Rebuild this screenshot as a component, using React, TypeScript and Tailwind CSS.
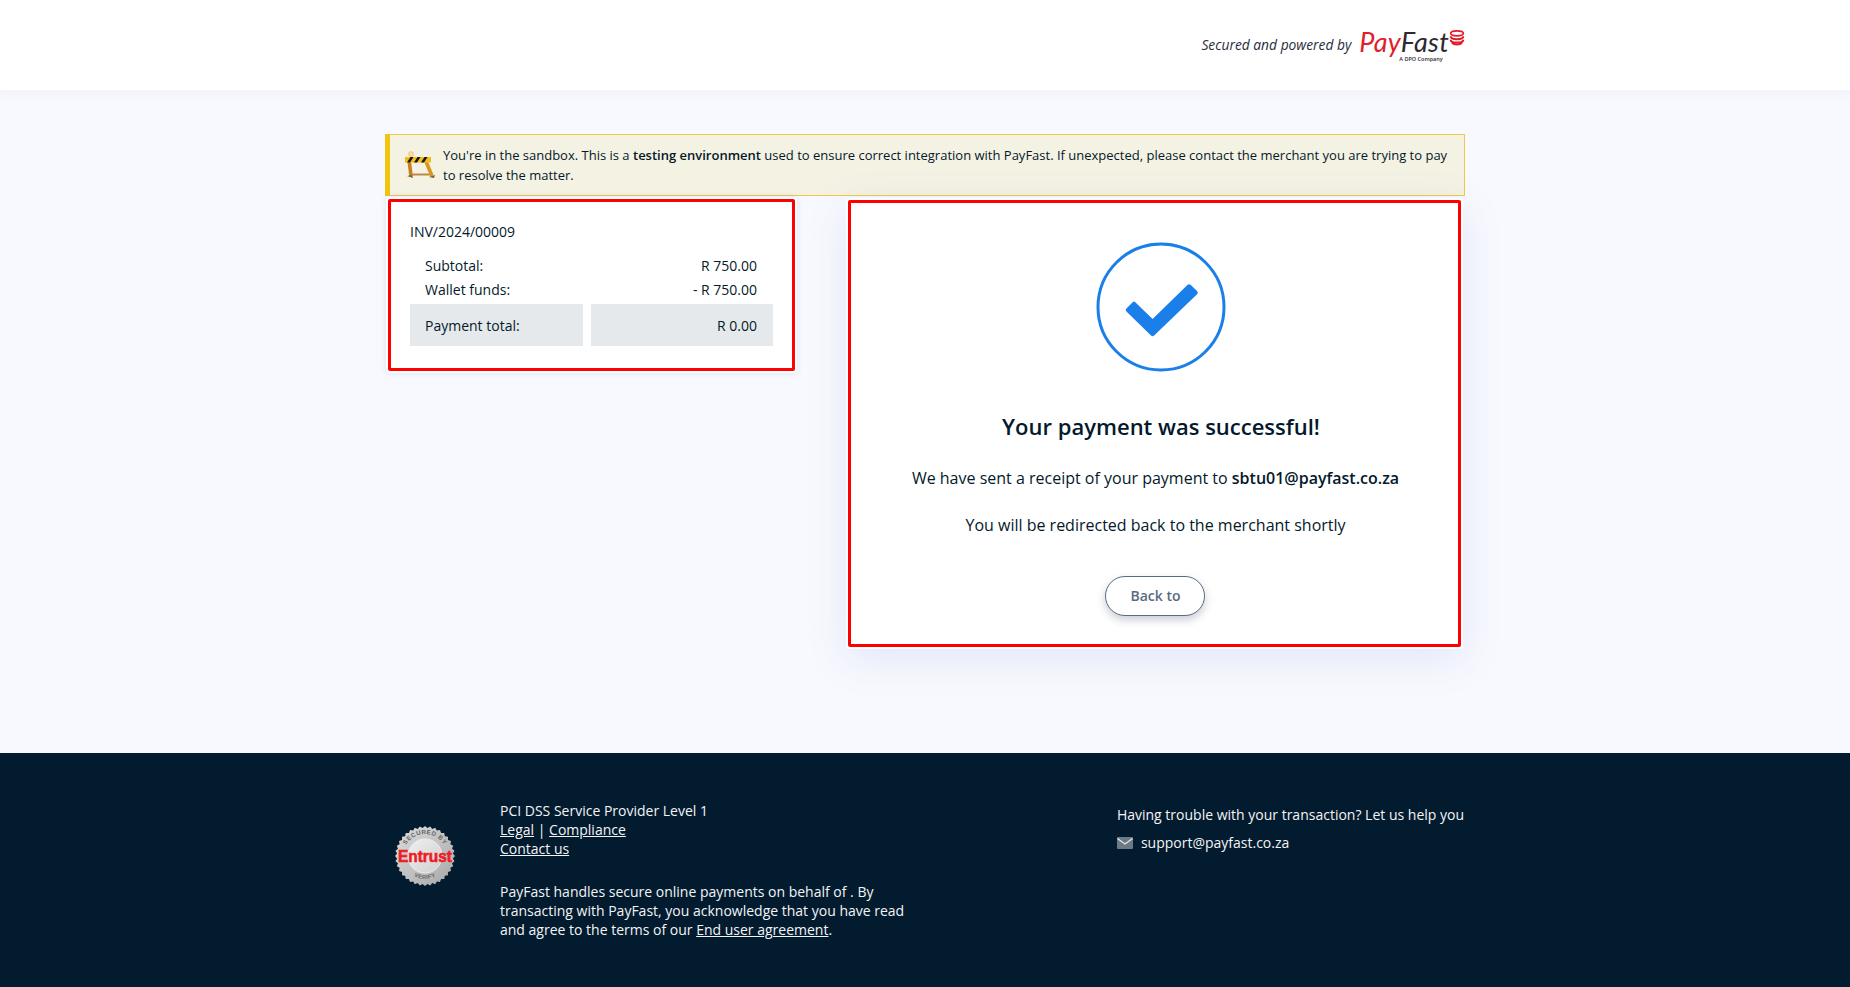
const font = { fontFamily: '"Open Sans", sans-serif' };

function Barricade() {
  return (
    <svg width="32" height="28" viewBox="0 0 32 28">
      <circle cx="8" cy="3" r="2.8" fill="#f0c98a" />
      <circle cx="8" cy="3" r="1.4" fill="#fbe6c0" />
      <path d="M6 8L8 25" stroke="#c77f1e" strokeWidth="3.6" />
      <path d="M22 8L29 25" stroke="#d9951f" strokeWidth="3.6" />
      <rect x="2" y="6" width="26" height="5.5" fill="#f0bd1d" />
      <path d="M4 11.5l3.5-5.5h3l-3.5 5.5zM11 11.5l3.5-5.5h3l-3.5 5.5zM18 11.5l3.5-5.5h3l-3.5 5.5z" fill="#1b1710" />
      <path d="M7 22.5h19l1 2H8z" fill="#b98a45" />
      <path d="M4 25l5-1 1 3zM26 26l6-2-1 3z" fill="#8a5a1e" />
    </svg>
  );
}

function CoinStack() {
  return (
    <svg width="16" height="16" viewBox="0 0 18 19" fill="none">
      <ellipse cx="9" cy="4" rx="7.5" ry="3" stroke="#e01f2d" strokeWidth="2" />
      <path d="M1.5 7.5c0 2 3.4 3.4 7.5 3.4s7.5-1.4 7.5-3.4" stroke="#e01f2d" strokeWidth="2.4" />
      <path d="M1.5 11.5c0 2 3.4 3.4 7.5 3.4s7.5-1.4 7.5-3.4" stroke="#e01f2d" strokeWidth="2.4" />
      <path d="M3 15c1 1.4 3.4 2.2 6 2.2s5-.8 6-2.2" stroke="#e01f2d" strokeWidth="2.2" />
    </svg>
  );
}

function EntrustBadge() {
  const teeth = 36;
  let scallop = '';
  for (let i = 0; i < teeth * 2; i++) {
    const r = i % 2 === 0 ? 30 : 28;
    const a = (i / (teeth * 2)) * Math.PI * 2;
    scallop += `${i === 0 ? 'M' : 'L'}${(30 + r * Math.cos(a)).toFixed(2)} ${(30 + r * Math.sin(a)).toFixed(2)}`;
  }
  return (
    <svg width="60" height="62" viewBox="0 0 60 60">
      <defs>
        <linearGradient id="seal" x1="0" y1="0" x2="1" y2="1">
          <stop offset="0" stopColor="#dcdcdc" />
          <stop offset="0.5" stopColor="#c2c2c2" />
          <stop offset="1" stopColor="#a6a6a6" />
        </linearGradient>
        <linearGradient id="sealInner" x1="0" y1="0" x2="1" y2="1">
          <stop offset="0" stopColor="#f0f0f0" />
          <stop offset="1" stopColor="#cfcfcf" />
        </linearGradient>
        <path id="arcTop" d="M8 30a22 22 0 0 1 44 0" />
        <path id="arcBottom" d="M7 30a23 23 0 0 0 46 0" />
      </defs>
      <path d={`${scallop}Z`} fill="url(#seal)" />
      <circle cx="30" cy="30" r="17" fill="url(#sealInner)" stroke="#ededed" strokeWidth="1" />
      <text fontSize="6.2" fontWeight="700" fill="#666666" fontFamily="Liberation Sans, sans-serif" letterSpacing="0.5">
        <textPath href="#arcTop" startOffset="50%" textAnchor="middle">SECURED BY</textPath>
      </text>
      <text fontSize="5.6" fontWeight="700" fill="#666666" fontFamily="Liberation Sans, sans-serif" letterSpacing="0.4">
        <textPath href="#arcBottom" startOffset="50%" textAnchor="middle">VERIFY</textPath>
      </text>
      <text x="30" y="35.5" textAnchor="middle" fontSize="16" fontWeight="700" fill="#ee1c25" stroke="#ee1c25" strokeWidth="0.6" fontFamily="Liberation Sans, sans-serif" textLength="54" lengthAdjust="spacingAndGlyphs">Entrust</text>
    </svg>
  );
}

function SummaryRow({ label, value }: { label: string; value: string }) {
  return (
    <div className="flex h-6 items-center justify-between pl-[15px] pr-[16px]">
      <span>{label}</span>
      <span>{value}</span>
    </div>
  );
}

export default function App() {
  return (
    <div className="min-h-[987px] bg-[#f8f9fe] text-[14px] text-[#04192b]" style={font}>
      <header className="h-[90px] bg-white shadow-[0_2px_12px_rgba(90,110,190,0.06)]">
        <div className="mx-auto flex h-full w-[1080px] items-center justify-end">
          <span className="mr-2 text-[13.8px] italic text-[#1f2d3d]">Secured and powered by</span>
          <div className="relative flex h-[34px] items-start">
            <span className="-mt-[2px] block text-[27px] leading-[32px] tracking-[0.3px] italic" style={{ fontFamily: 'Lato, sans-serif' }}>
              <span className="text-[#e01f2d]">Pay</span>
              <span className="text-[#2b2b30]">Fast</span>
            </span>
            <span className="mt-[2px]">
              <CoinStack />
            </span>
            <span className="absolute bottom-0 left-[40px] text-[5.5px] font-semibold leading-none whitespace-nowrap text-[#2b2b30]">
              A DPO Company
            </span>
          </div>
        </div>
      </header>

      <main className="mx-auto h-[663px] w-[1080px] pt-[44px]">
        <div className="flex min-h-[62px] items-center border border-[#ecc94b] border-l-[5px] border-l-[#f1c40f] bg-[#f4f2e3] py-[7px] pr-[10px] text-[13px] leading-[20px]">
          <div className="ml-[13px] mr-[8px] shrink-0">
            <Barricade />
          </div>
          <p>
            You're in the sandbox. This is a <b className="font-semibold">testing environment</b> used to ensure correct integration with PayFast. If unexpected, please contact the merchant you are trying to pay to resolve the matter.
          </p>
        </div>

        <div className="mt-[1px] flex items-start justify-between">
          <section className="ml-[1px] w-[411px] rounded-[4px] bg-white p-[2px] shadow-[0_0_6px_rgba(90,110,190,0.18)]">
            <div className="h-[172px] rounded-[2px] border-[3px] border-[#ff0000] px-[19px] pt-[18px]">
              <p className="leading-[24px]">INV/2024/00009</p>
              <div className="mt-[9px]">
                <SummaryRow label="Subtotal:" value="R 750.00" />
                <SummaryRow label="Wallet funds:" value="- R 750.00" />
              </div>
              <div className="mt-[3px] flex gap-2">
                <div className="flex h-[42px] w-[173px] items-center bg-[#e6e9eb] px-[15px]">Payment total:</div>
                <div className="flex h-[42px] flex-1 items-center justify-end bg-[#e6e9eb] pl-[15px] pr-[16px]">R 0.00</div>
              </div>
            </div>
          </section>

          <section className="mr-[2px] mt-[1px] w-[617px] rounded-[4px] bg-white p-[2px] shadow-[0_10px_40px_rgba(90,110,220,0.14)]">
            <div className="flex h-[447px] flex-col items-center rounded-[2px] border-[3px] border-[#ff0000] pt-[39px]">
              <svg className="ml-[13px]" width="130" height="130" viewBox="0 0 130 130" fill="none">
                <circle cx="65" cy="65" r="63" stroke="#1a7fe8" strokeWidth="3" />
                <path d="M38 62L32 68L56.6 92L99.5 50.7L93 44.5L56.6 80Z" fill="#1a7fe8" stroke="#1a7fe8" strokeWidth="4.5" strokeLinejoin="round" />
              </svg>
              <h1 className="ml-[13px] mt-[39px] text-[22px] leading-[30px] font-semibold">Your payment was successful!</h1>
              <p className="ml-[2px] mt-[26px] text-[16px] leading-[22px]">
                We have sent a receipt of your payment to <b className="font-semibold">sbtu01@payfast.co.za</b>
              </p>
              <p className="ml-[2px] mt-[25px] text-[16px] leading-[22px]">You will be redirected back to the merchant shortly</p>
              <button className="mt-[40px] h-[40px] w-[100px] rounded-[20px] border border-[#5a6b80] bg-white pb-[2px] pl-[2px] text-[14px] font-semibold text-[#5a6b82] shadow-[0_4px_8px_rgba(50,60,90,0.25)]">
                Back to
              </button>
            </div>
          </section>
        </div>
      </main>

      <footer className="h-[234px] bg-[#031b2e] text-[14px] leading-[19px] text-[#f2f4f6]">
        <div className="mx-auto flex w-[1080px] items-start pt-[48px]">
          <div className="ml-[10px] mt-[24px] w-[105px] shrink-0">
            <EntrustBadge />
          </div>
          <div className="w-[420px] shrink-0">
            <p>PCI DSS Service Provider Level 1</p>
            <p>
              <a className="underline" href="#">Legal</a> | <a className="underline" href="#">Compliance</a>
            </p>
            <p>
              <a className="underline" href="#">Contact us</a>
            </p>
            <p className="mt-[24px]">
              PayFast handles secure online payments on behalf of . By transacting with PayFast, you acknowledge that you have read and agree to the terms of our <a className="underline" href="#">End user agreement</a>.
            </p>
          </div>
          <div className="ml-auto mr-[1px]">
            <p className="mt-[4px]">Having trouble with your transaction? Let us help you</p>
            <p className="mt-[9px] flex items-center gap-2">
              <svg width="16" height="12" viewBox="0 0 16 12">
                <rect width="16" height="12" rx="1" fill="#6d7a86" />
                <path d="M0.5 1.5L8 7l7.5-5.5" fill="none" stroke="#e6e9eb" strokeWidth="1.2" />
              </svg>
              <span>support@payfast.co.za</span>
            </p>
          </div>
        </div>
      </footer>
    </div>
  );
}
